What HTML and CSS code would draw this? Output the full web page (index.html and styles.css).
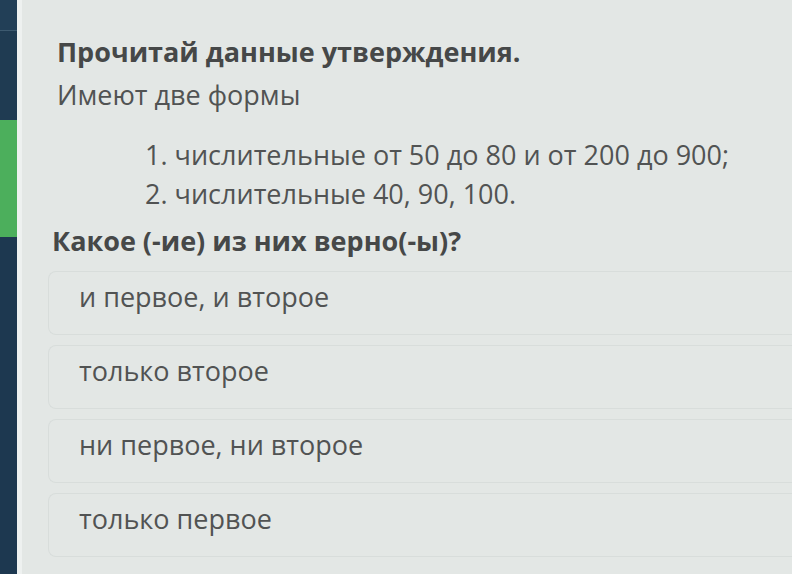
FILE: index.html
```html
<!DOCTYPE html>
<html lang="ru">
<head>
	<meta charset="UTF-8">
	<title>Тест</title>
	<link rel="stylesheet" href="styles.css">
</head>
<body>
	<div class="page">
		<aside class="rail">
			<div class="rail-top"></div>
			<div class="rail-item"></div>
			<div class="rail-item active"></div>
			<div class="rail-item rest"></div>
		</aside>
		<div class="edge"></div>
		<main class="quiz">
			<h1 class="prompt">Прочитай данные утверждения.</h1>
			<p class="lead">Имеют две формы</p>
			<ol class="forms">
				<li>числительные от 50 до 80 и от 200 до 900;</li>
				<li>числительные 40, 90, 100.</li>
			</ol>
			<h2 class="question">Какое (-ие) из них верно(-ы)?</h2>
			<ul class="answers">
				<li class="answer">и первое, и второе</li>
				<li class="answer">только второе</li>
				<li class="answer">ни первое, ни второе</li>
				<li class="answer">только первое</li>
			</ul>
		</main>
	</div>
</body>
</html>
```

FILE: styles.css
```css
html, body {
	width: 100%;
	height: 100%;
	margin: 0;
	padding: 0;
}

body {
	background: #e3e7e5;
	font-family: "Open Sans", "Noto Sans", sans-serif;
	color: #515353;
	overflow: hidden;
}

.page {
	display: flex;
	height: 100%;
}

/* left navigation strip */
.rail {
	width: 17px;
	flex: none;
	display: flex;
	flex-direction: column;
	background: #1f3b52;
}
.rail-top {
	height: 30px;
	border-bottom: 1px solid #3d5a70;
	background: #223f57;
}
.rail-item {
	height: 89px;
}
.rail-item.active {
	height: 117px;
	background: #4caf5c;
}
.rail-item.rest {
	flex: 1;
	background: #1d3850;
}

.edge {
	width: 5px;
	flex: none;
	background: #eef1f0;
}

.quiz {
	flex: 1;
	padding: 32px 0 0 35px;
}

.prompt {
	margin: 0;
	font-size: 27px;
	font-weight: 700;
	line-height: 40px;
	color: #464848;
}

.lead {
	margin: 3px 0 0;
	font-size: 27px;
	line-height: 40px;
}

.forms {
	margin: 20px 0 0;
	padding-left: 88px;
	list-style: none;
	counter-reset: form;
	font-size: 27px;
	line-height: 39px;
}
.forms li {
	counter-increment: form;
}
.forms li::before {
	content: counter(form) ". ";
}

.question {
	margin: 8px 0 0 -5px;
	font-size: 27px;
	font-weight: 700;
	line-height: 40px;
	color: #464848;
}

.answers {
	margin: 10px 0 0 -9px;
	padding: 0;
	list-style: none;
	display: flex;
	flex-direction: column;
	gap: 10px;
}
.answer {
	height: 64px;
	box-sizing: border-box;
	padding: 7px 0 0 30px;
	border: 1px solid #d8dddb;
	border-right: none;
	border-radius: 8px 0 0 8px;
	font-size: 27px;
	line-height: 36px;
}
```
